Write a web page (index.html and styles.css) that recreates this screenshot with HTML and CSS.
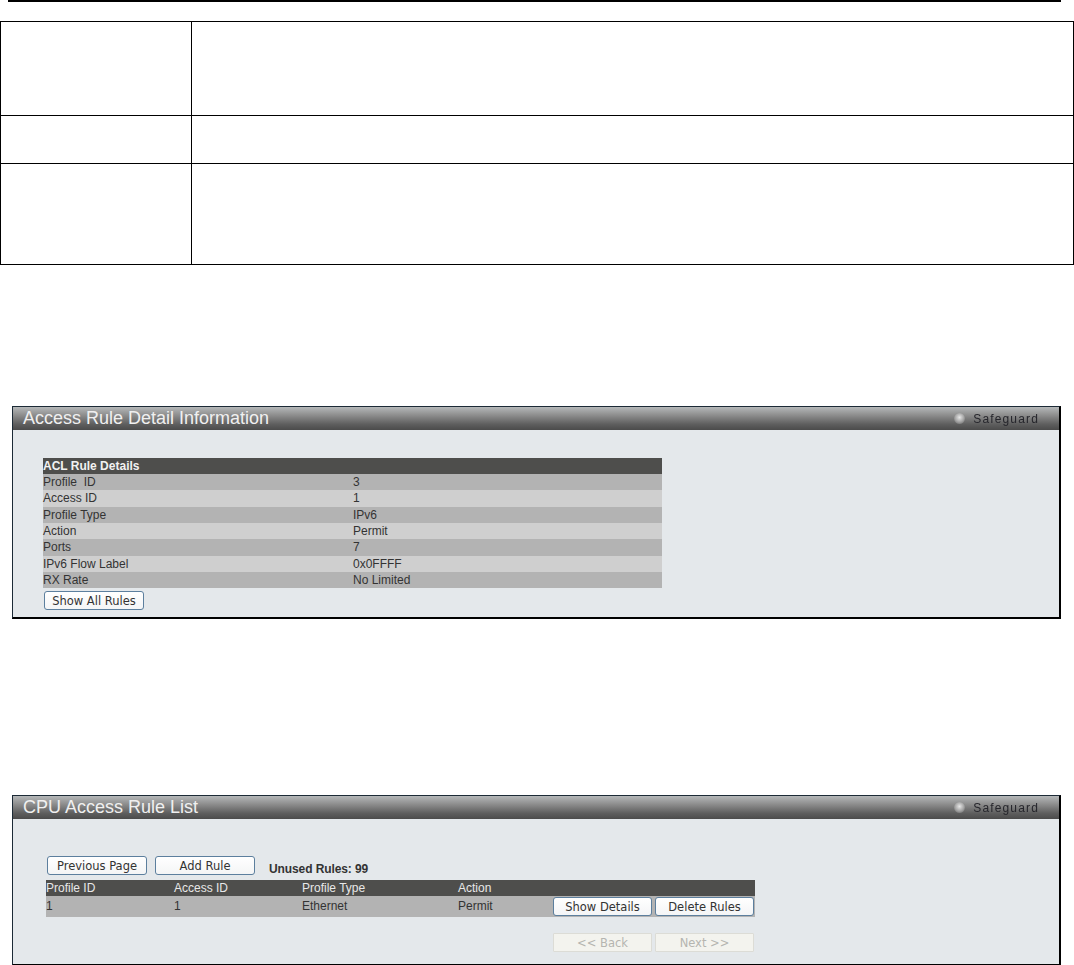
FILE: index.html
```html
<!DOCTYPE html>
<html lang="en">
<head>
<meta charset="utf-8">
<title>Access Rules</title>
<link rel="stylesheet" href="styles.css">
</head>
<body>
<div class="rule"></div>
<table class="doc">
  <tr class="r1"><td class="c1"></td><td></td></tr>
  <tr class="r2"><td class="c1"></td><td></td></tr>
  <tr class="r3"><td class="c1"></td><td></td></tr>
</table>

<section class="panel p1">
  <header class="bar">
    <h2>Access Rule Detail Information</h2>
    <div class="safe"><span class="dot"></span><span>Safeguard</span></div>
  </header>
  <div class="body1">
    <div class="details">
      <div class="dhead">ACL Rule Details</div>
      <div class="drow odd"><span>Profile &nbsp;ID</span><span>3</span></div>
      <div class="drow even"><span>Access ID</span><span>1</span></div>
      <div class="drow odd"><span>Profile Type</span><span>IPv6</span></div>
      <div class="drow even"><span>Action</span><span>Permit</span></div>
      <div class="drow odd"><span>Ports</span><span>7</span></div>
      <div class="drow even"><span>IPv6 Flow Label</span><span>0x0FFFF</span></div>
      <div class="drow odd"><span>RX Rate</span><span>No Limited</span></div>
    </div>
    <button class="btn showall">Show All Rules</button>
  </div>
</section>

<section class="panel p2">
  <header class="bar">
    <h2>CPU Access Rule List</h2>
    <div class="safe"><span class="dot"></span><span>Safeguard</span></div>
  </header>
  <div class="body2">
    <div class="tools">
      <button class="btn">Previous Page</button>
      <button class="btn">Add Rule</button>
      <strong class="unused">Unused Rules: 99</strong>
    </div>
    <div class="list">
      <div class="lhead"><span>Profile ID</span><span>Access ID</span><span>Profile Type</span><span>Action</span></div>
      <div class="lrow">
        <span>1</span><span>1</span><span>Ethernet</span><span>Permit</span>
        <div class="rowbtns"><button class="btn">Show Details</button><button class="btn">Delete Rules</button></div>
      </div>
    </div>
    <div class="pager">
      <button class="btn off" disabled>&lt;&lt; Back</button>
      <button class="btn off" disabled>Next &gt;&gt;</button>
    </div>
  </div>
</section>
</body>
</html>
```
FILE: styles.css
```css
html, body { margin: 0; padding: 0; background: #fff; }
body { width: 1074px; height: 965px; overflow: hidden; font-family: "Liberation Sans", Arial, sans-serif; font-size: 12px; color: #333; }

.rule { height: 2px; margin: 0 13px 19px 8px; background: #000; }

.doc { width: 1074px; border-collapse: collapse; table-layout: fixed; border: 1px solid #000; box-sizing: border-box; }
.doc td { border: 1px solid #000; padding: 0; }
.doc .c1 { width: 190px; }
.r1 { height: 94px; }
.r2 { height: 48px; }
.r3 { height: 101px; }

.panel { box-sizing: border-box; width: 1049px; margin-left: 12px; background: #e4e8eb; border: 1px solid #1c2a36; border-right: 2px solid #000; border-bottom: 2px solid #000; }
.p1 { margin-top: 141px; height: 213px; }
.p2 { margin-top: 176px; height: 171px; }

.bar { height: 23px; display: flex; align-items: center; justify-content: space-between; padding: 0 20px 0 10px; background: linear-gradient(#b5b8b9 0, #8e8e8e 35%, #5e5e5e 75%, #4b4b4b 100%); }
.bar h2 { margin: -1px 0 0; font-size: 18px; font-weight: normal; color: #f0f0f0; }
.safe { display: flex; align-items: center; gap: 8px; font-size: 12px; color: #26262c; letter-spacing: 1.15px; filter: blur(.7px); }
.dot { width: 11px; height: 11px; border-radius: 50%; background: radial-gradient(circle at 50% 40%, #e8e8e8, #a0a0a0 55%, #555); }

.body1 { padding: 28px 0 0 30px; }
.details { width: 619px; }
.dhead { height: 16px; line-height: 16px; background: #4e4e4c; color: #f2f2f2; font-weight: bold; }
.drow { height: 16.33px; line-height: 16px; display: grid; grid-template-columns: 310px 1fr; }
.odd { background: #b3b3b3; }
.even { background: #cfcfcf; }

.btn { box-sizing: border-box; width: 100px; height: 19px; padding: 0; font-family: "DejaVu Sans", Verdana, sans-serif; font-size: 11.5px; color: #333; background: linear-gradient(#fff, #f4f5f6); border: 1px solid #5c7f9e; border-radius: 3px; }
.showall { display: block; margin: 3px 0 0 1px; }

.body2 { padding: 37px 0 0 33px; }
.tools { display: flex; align-items: center; gap: 8px; height: 19px; padding-left: 1px; }
.unused { margin: 7px 0 0 6px; font-weight: bold; letter-spacing: -.1px; }
.list { width: 709px; margin-top: 5px; }
.lhead { height: 16px; line-height: 16px; display: grid; grid-template-columns: 128px 128px 156px 1fr; background: #4e4e4c; color: #e8e8e8; }
.lrow { height: 21px; line-height: 21px; display: grid; grid-template-columns: 128px 128px 156px 95px auto; background: #b3b3b3; }
.rowbtns { display: flex; gap: 3px; height: 19px; margin-top: 1px; }
.rowbtns .btn { width: 99px; }
.pager { display: flex; gap: 3px; margin: 16px 0 0 507px; }
.pager .btn { width: 99px; }
.off { background: #f3f3ee; border-color: #dcdcd6; color: #b5b5b0; border-radius: 1px; }
```
